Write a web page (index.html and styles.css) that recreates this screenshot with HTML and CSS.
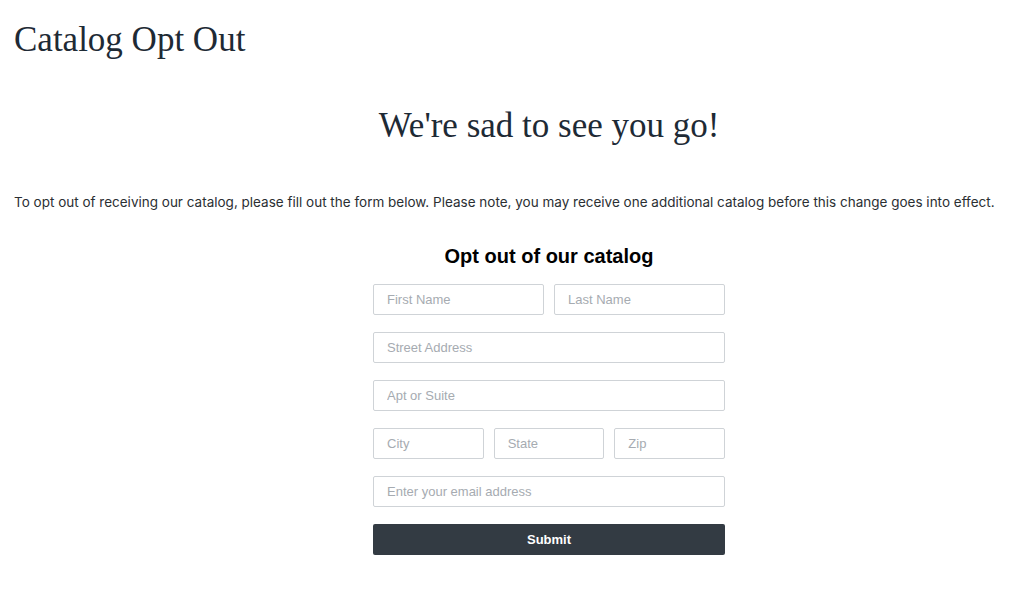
FILE: index.html
```html
<!DOCTYPE html>
<html lang="en">
<head>
    <meta charset="UTF-8">
    <meta name="viewport" content="width=device-width, initial-scale=1.0">
    <title>Catalog Opt Out</title>
    <link rel="stylesheet" href="styles.css">
</head>
<body>
    <header class="page-header">
        <h1 class="page-title">Catalog Opt Out</h1>
    </header>

    <main class="page-content">
        <h2 class="sad-title">We're sad to see you go!</h2>

        <p class="intro">To opt out of receiving our catalog, please fill out the form below. Please note, you may receive one additional catalog before this change goes into effect.</p>

        <form class="optout-form">
            <h3 class="form-title">Opt out of our catalog</h3>
            <div class="form-row cols-2">
                <input class="field" type="text" placeholder="First Name">
                <input class="field" type="text" placeholder="Last Name">
            </div>
            <div class="form-row">
                <input class="field" type="text" placeholder="Street Address">
            </div>
            <div class="form-row">
                <input class="field" type="text" placeholder="Apt or Suite">
            </div>
            <div class="form-row cols-3">
                <input class="field" type="text" placeholder="City">
                <input class="field" type="text" placeholder="State">
                <input class="field" type="text" placeholder="Zip">
            </div>
            <div class="form-row">
                <input class="field" type="email" placeholder="Enter your email address">
            </div>
            <button class="submit-button" type="button">Submit</button>
        </form>
    </main>
</body>
</html>
```

FILE: styles.css
```css
* {
    margin: 0;
    padding: 0;
    box-sizing: border-box;
}

body {
    font-family: 'Inter', 'Liberation Sans', sans-serif;
    background: #fff;
    color: #2b2f33;
}

.page-header {
    padding: 21px 14px 0;
}

.page-title {
    font-family: 'Liberation Serif', 'DejaVu Serif', serif;
    font-weight: normal;
    font-size: 35px;
    line-height: 38px;
    color: #1e2a35;
}

.page-content {
    padding: 0 0 40px 74px;
    display: flex;
    flex-direction: column;
    align-items: center;
}

.sad-title {
    font-family: 'Liberation Serif', 'DejaVu Serif', serif;
    font-weight: normal;
    font-size: 35px;
    line-height: 38px;
    color: #1e2a35;
    margin-top: 48px;
}

.intro {
    align-self: stretch;
    margin-left: -60px;
    margin-top: 48px;
    font-size: 13.5px;
    line-height: 18px;
    color: #2b2f33;
}

.optout-form {
    width: 352px;
    margin-top: 33px;
}

.form-title {
    font-family: 'Liberation Sans', Arial, sans-serif;
    font-weight: bold;
    font-size: 20px;
    line-height: 24px;
    color: #000;
    text-align: center;
    margin-bottom: 16px;
}

.form-row {
    display: grid;
    grid-template-columns: 1fr;
    gap: 10px;
    margin-bottom: 17px;
}

.form-row.cols-2 {
    grid-template-columns: 1fr 1fr;
}

.form-row.cols-3 {
    grid-template-columns: 1fr 1fr 1fr;
}

.field {
    height: 31px;
    width: 100%;
    border: 1px solid #cfd3d7;
    border-radius: 2px;
    padding: 0 13px;
    font-family: 'Liberation Sans', Arial, sans-serif;
    font-size: 13px;
    color: #333;
    outline: none;
}

.field::placeholder {
    color: #a6abb1;
}

.submit-button {
    display: block;
    width: 100%;
    height: 31px;
    border: none;
    border-radius: 2px;
    background: #333b43;
    color: #fff;
    font-family: 'Liberation Sans', Arial, sans-serif;
    font-weight: bold;
    font-size: 13px;
    cursor: pointer;
}
```
